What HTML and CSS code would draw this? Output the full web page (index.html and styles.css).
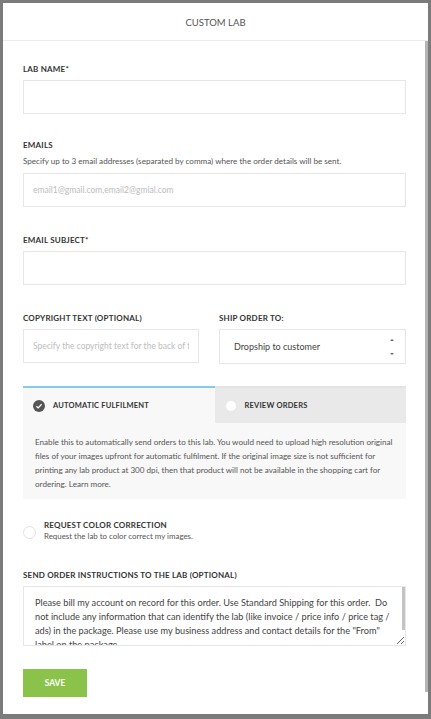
FILE: index.html
```html
<!DOCTYPE html>
<html>
    <head>
        <meta charset="UTF-8">
        <meta name="viewport" content="width=device-width, initial-scale=1.0">
        <link rel="stylesheet" href="styles.css">
    </head>

    <body>

        <div class="modal">
            <div class="modal-head">CUSTOM LAB</div>

            <div class="modal-body">

                <div class="field">
                    <label class="label">LAB NAME*</label>
                    <input class="input" type="text">
                </div>

                <div class="field">
                    <label class="label">EMAILS</label>
                    <div class="hint">Specify up to 3 email addresses (separated by comma) where the order details will be sent.</div>
                    <input class="input" type="text" placeholder="email1@gmail.com,email2@gmial.com">
                </div>

                <div class="field">
                    <label class="label">EMAIL SUBJECT*</label>
                    <input class="input" type="text">
                </div>

                <div class="field row">
                    <div class="col">
                        <label class="label">COPYRIGHT TEXT (OPTIONAL)</label>
                        <input class="input" type="text" placeholder="Specify the copyright text for the back of the prints">
                    </div>
                    <div class="col">
                        <label class="label">SHIP ORDER TO:</label>
                        <div class="select">
                            <span>Dropship to customer</span>
                            <span class="arrows"><i class="up"></i><i class="down"></i></span>
                        </div>
                    </div>
                </div>

                <div class="tabs">
                    <div class="tab active">
                        <span class="check">
                            <svg width="12" height="12" viewBox="0 0 12 12">
                                <circle cx="6" cy="6" r="6" fill="#555"></circle>
                                <path d="M3.4 6.2 L5.2 7.9 L8.6 4.3" fill="none" stroke="#fff" stroke-width="1.3"></path>
                            </svg>
                        </span>
                        AUTOMATIC FULFILMENT
                    </div>
                    <div class="tab">
                        <span class="dot"></span>
                        REVIEW ORDERS
                    </div>
                </div>
                <div class="tab-panel">
                    Enable this to automatically send orders to this lab. You would need to upload high resolution original files of your images upfront for automatic fulfilment. If the original image size is not sufficient for printing any lab product at 300 dpi, then that product will not be available in the shopping cart for ordering. Learn more.
                </div>

                <div class="option">
                    <span class="radio"></span>
                    <div>
                        <div class="option-title">REQUEST COLOR CORRECTION</div>
                        <div class="option-desc">Request the lab to color correct my images.</div>
                    </div>
                </div>

                <div class="field">
                    <label class="label">SEND ORDER INSTRUCTIONS TO THE LAB (OPTIONAL)</label>
                    <div class="textarea-wrap">
                        <textarea class="textarea">Please bill my account on record for this order. Use Standard Shipping for this order.  Do not include any information that can identify the lab (like invoice / price info / price tag / ads) in the package. Please use my business address and contact details for the "From" label on the package.</textarea>
                        <span class="textarea-thumb"></span>
                    </div>
                </div>

                <button class="save">SAVE</button>

            </div>
            <span class="scroll-thumb"></span>
        </div>

    </body>
</html>
```

FILE: styles.css
```css
body {
    margin: 0;
    background: #7b7b7b;
    font-family: Lato, "Open Sans", sans-serif;
    color: #444;
}

.modal {
    position: relative;
    margin: 3px 3px 5px 3px;
    height: 711px;
    background: #fff;
    display: flex;
    flex-direction: column;
}

.modal-head {
    height: 37px;
    line-height: 39px;
    text-align: center;
    font-size: 9.5px;
    color: #555;
    border-bottom: 1px solid #ececec;
    flex: none;
}

.modal-body {
    flex: 1;
    overflow: hidden;
    padding: 23px 22px 0 20px;
}

.scroll-thumb {
    position: absolute;
    right: 0;
    top: 38px;
    width: 3px;
    height: 651px;
    background: #b5b5b5;
}

.field {
    margin-bottom: 28px;
}
.field:first-child {
    margin-bottom: 26px;
}

.label {
    display: block;
    font-size: 8px;
    font-weight: bold;
    letter-spacing: 0.2px;
    color: #333;
    line-height: 10px;
    margin-bottom: 6px;
}

.hint {
    font-size: 8.1px;
    color: #555;
    line-height: 10px;
    margin: 0 0 7px;
}

.input {
    display: block;
    box-sizing: border-box;
    width: 100%;
    height: 34px;
    border: 1px solid #e6e6e6;
    padding: 0 9px;
    font-family: inherit;
    font-size: 8.5px;
    color: #444;
    outline: none;
}
.input::placeholder {
    color: #bdbdbd;
}

.row {
    display: grid;
    grid-template-columns: 176px 1fr;
    gap: 20px;
    margin-bottom: 22px;
}

.select {
    box-sizing: border-box;
    height: 35px;
    border: 1px solid #e6e6e6;
    display: flex;
    align-items: center;
    justify-content: space-between;
    padding: 0 11px 0 14px;
    font-size: 9px;
    color: #444;
}
.arrows {
    display: flex;
    flex-direction: column;
    gap: 12px;
}
.arrows i {
    display: block;
    width: 0;
    height: 0;
    border-left: 2px solid transparent;
    border-right: 2px solid transparent;
}
.arrows .up {
    border-bottom: 2px solid #666;
}
.arrows .down {
    border-top: 2px solid #666;
}

.tabs {
    display: flex;
}
.tab {
    flex: 1;
    height: 35px;
    border-top: 2px solid #e3e3e3;
    background: #e9e9e9;
    display: flex;
    align-items: center;
    padding-left: 10px;
    font-size: 7.5px;
    font-weight: bold;
    color: #333;
    letter-spacing: 0.2px;
}
.tab.active {
    border-top-color: #86cbe8;
    background: #f8f8f8;
}
.check {
    display: flex;
    margin-right: 8px;
}
.dot {
    width: 10px;
    height: 10px;
    border-radius: 50%;
    background: #fff;
    margin: 0 9px 0 1px;
}

.tab-panel {
    background: #f8f8f8;
    padding: 12px 12px 8px;
    font-size: 8.1px;
    line-height: 14px;
    color: #555;
    margin-bottom: 21px;
}

.option {
    display: flex;
    align-items: center;
    gap: 8px;
    margin-bottom: 28px;
}
.radio {
    width: 11px;
    height: 11px;
    border: 1px solid #e2e2e2;
    border-radius: 50%;
    margin-top: 2px;
}
.option-title {
    font-size: 8px;
    font-weight: bold;
    color: #333;
    letter-spacing: 0.2px;
    line-height: 11px;
}
.option-desc {
    font-size: 7.9px;
    color: #555;
    line-height: 11px;
}

.textarea-wrap {
    position: relative;
}
.textarea {
    display: block;
    box-sizing: border-box;
    width: 100%;
    height: 60px;
    border: 1px solid #e6e6e6;
    padding: 9px 10px 0 11px;
    font-family: inherit;
    font-size: 9.2px;
    line-height: 14px;
    color: #444;
    resize: vertical;
    outline: none;
    overflow: hidden;
}
.textarea-thumb {
    position: absolute;
    right: 1px;
    top: 1px;
    width: 3px;
    height: 43px;
    background: #c4c4c4;
}

.save {
    display: block;
    width: 64px;
    height: 28px;
    margin-top: -5px;
    border: none;
    background: #8bc34a;
    color: #fff;
    font-family: inherit;
    font-size: 8.5px;
    font-weight: bold;
}
```
